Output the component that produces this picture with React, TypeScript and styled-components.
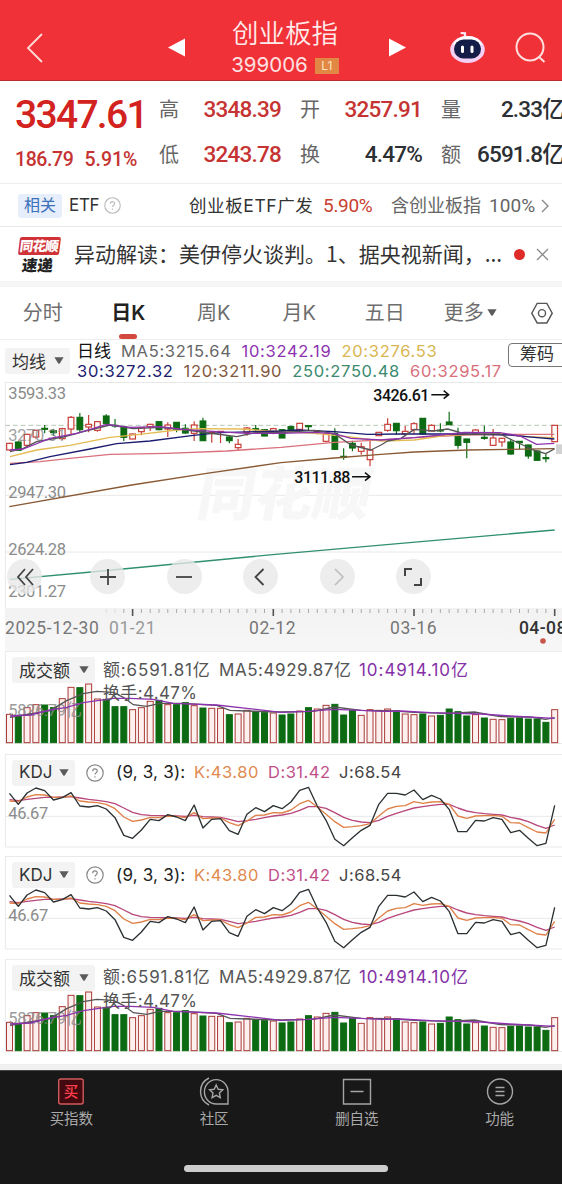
import React from "react";
import styled, { createGlobalStyle } from "styled-components";

const CJK = '"Noto Sans CJK SC", sans-serif';

const Global = createGlobalStyle`
  * { box-sizing: border-box; }
  body { margin: 0; background: #fff; font-family: Inter, ${CJK}; color: #333; overflow: hidden; }
  svg { display: block; }
`;

const Page = styled.div`
  width: 562px; height: 1184px; overflow: hidden;
  display: flex; flex-direction: column; background: #fff;
`;

const Txt = styled.span<{ $s: number; $c?: string; $ls?: number; $w?: number; $width?: number }>`
  font-size: ${p => p.$s}px; color: ${p => p.$c || "#333"};
  letter-spacing: ${p => p.$ls || 0}px; font-weight: ${p => p.$w || 400};
  width: ${p => (p.$width ? p.$width + "px" : "auto")};
  white-space: nowrap; line-height: 1; flex: none;
`;
const Num = styled(Txt)`font-family: Roboto, ${CJK};`;

/* header */
const Header = styled.header`
  height: 81px; background: #f03137; border-bottom: 1px solid #b9292d;
  display: flex; align-items: flex-start; flex: none;
`;
const HeadCell = styled.div<{ $w: number; $t: number; $l?: number }>`
  width: ${p => p.$w}px; padding: ${p => p.$t}px 0 0 ${p => p.$l || 0}px; flex: none;
`;
const Title = styled.div`
  width: 178px; padding-top: 20px; display: flex; flex-direction: column; align-items: center; gap: 9px; flex: none;
`;
const CodeRow = styled.div`display: flex; align-items: center; gap: 7px; height: 20px;`;
const Level = styled.span`
  width: 24px; height: 16px; background: #e08844; color: #ffe2c0; font-size: 12px; line-height: 16px; text-align: center;
`;

/* quote */
const Quote = styled.section`
  height: 103px; border-bottom: 1px solid #eee; padding-top: 15px; flex: none; overflow: hidden;
  display: grid; grid-template-columns: 159px 141px 141px 125px;
`;
const PriceCol = styled.div`padding-left: 15px; display: flex; flex-direction: column;`;
const Changes = styled.div`display: flex; gap: 11px; margin-top: 15px;`;
const Stats = styled.div`display: flex; flex-direction: column; gap: 22px; padding-right: 19px; padding-top: 2px;
  &:last-child { padding-right: 2px; }`;
const Stat = styled.div`display: flex; justify-content: space-between; align-items: center; height: 23px;`;

/* related etf */
const Related = styled.section`
  height: 43px; border-bottom: 1px solid #e8e8e8; display: flex; align-items: center; padding: 1px 0 0 18px; flex: none;
`;
const Tag = styled.span`
  width: 44px; height: 24px; border-radius: 3px; background: #e5eefa; color: #3c6fba; font-size: 16px; line-height: 22px;
  text-align: center; margin-right: 7px; flex: none;
`;
const Fund = styled(Txt)`margin-left: 68px;`;
const News = styled.section`
  height: 60px; border-bottom: 6px solid #f5f5f5; display: flex; align-items: center; padding-left: 18px; flex: none;
`;
const Badge = styled.div`width: 43px; display: flex; flex-direction: column; align-items: center; font-weight: 900; margin-right: 13px; font-family: ${CJK};`;
const BadgeTop = styled.div`
  width: 41px; height: 18px; border-radius: 2px; background: #cf3338; color: #fff; font-size: 13.5px; line-height: 17px; text-align: center; transform: skewX(-7deg); letter-spacing: -0.8px;
  text-indent: -1px;
`;
const BadgeBottom = styled.div`font-size: 15.5px; line-height: 16px; color: #222; transform: skewX(-7deg); margin: 1px 3px 0 0;`;
const Dot = styled.i`width: 11px; height: 11px; border-radius: 50%; background: #e02c28; margin: 0 11px 0 14px;`;
const Headline = styled(Txt)`font-family: ${CJK}; padding-bottom: 2px;`;

/* tabs */
const Tabs = styled.nav`height: 53px; border-bottom: 1px solid #eee; display: flex; flex: none;`;
const Tab = styled.div<{ $on?: boolean; $w?: number }>`
  width: ${p => p.$w || 85.5}px; flex: none; display: flex; flex-direction: column; align-items: center;
  padding-top: 15px; gap: 10px; font-size: 20px; line-height: 22px; color: ${p => (p.$on ? "#222" : "#6e6e6e")};
  font-weight: ${p => (p.$on ? 600 : 400)};
  &::after { content: ""; width: 18px; height: 5px; border-radius: 3px; background: ${p => (p.$on ? "#d4483f" : "transparent")}; }
`;
const More = styled.span`display: flex; align-items: center; gap: 3px; svg { margin-bottom: 2px; }`;

/* legend */
const LegendBar = styled.section`height: 42px; display: flex; flex: none; padding-left: 5px; overflow: hidden;`;
const Picker = styled.div<{ $w: number; $t?: number }>`
  width: ${p => p.$w}px; height: 26px; border-radius: 3px; background: #f3f3f3; color: #333; font-size: 17px;
  display: flex; align-items: center; justify-content: space-between; padding: 0 6px 1px 7px; flex: none;
  margin-top: ${p => p.$t || 0}px;
`;
const Lines = styled.div`width: 438px; padding: 1px 0 0 7px; flex: none;`;
const Line = styled.div`height: 20px; display: flex; align-items: center; gap: 10px;`;
const Chips = styled.div`
  width: 62px; height: 24px; margin-top: 3px; border: 1px solid #777; border-radius: 4px; font-size: 17px; line-height: 21px; padding-left: 11px; color: #333; flex: none;
`;

/* charts */
const Chart = styled.section`position: relative; height: 226px; flex: none;`;
const Controls = styled.div`
  position: absolute; left: 7px; top: 177px; display: flex; gap: 41.4px;
`;
const RoundBtn = styled.div<{ $off?: boolean }>`
  width: 35px; height: 35px; border-radius: 50%; background: rgba(232,232,232,0.78);
  display: flex; align-items: center; justify-content: center; flex: none; color: ${p => (p.$off ? "#bbb" : "#444")};
  &:first-child { margin-right: 7px; }
`;
const Axis = styled.section`
  height: 43px; margin-left: 5px; background: linear-gradient(#f2f2f2, #f7f7f7); flex: none; overflow: hidden;
`;
const Dates = styled.div`display: grid; grid-template-columns: 104px 140px 141px 129px 60px; padding-top: 2px;`;
const PanelBox = styled.section`position: relative; height: 102.5px; flex: none;`;
const PanelHead = styled.div`
  position: absolute; left: 12px; top: 6px; right: 0; display: flex; align-items: center;
`;
const HeadText = styled.div`display: flex; padding-left: 8px;`;
const HelpWrap = styled.span`padding: 0 12px 0 11px;`;
const Sub = styled.div`position: absolute; left: 103px; top: 34px; line-height: 1; font-size: 0;`;
const Spacer = styled.div`flex: 1; border-bottom: 6px solid #f0f0f0;`;

/* bottom */
const Bottom = styled.footer`height: 114px; background: #181818; border-top: 1px solid #444; flex: none; display: flex; flex-direction: column; align-items: center; justify-content: space-between; padding-bottom: 12px;`;
const NavRow = styled.div`width: 571px; align-self: flex-start; display: flex; padding-top: 6px;`;
const NavItem = styled.div`width: 143px; display: flex; flex-direction: column; align-items: center; gap: 3px; color: #aaa; font-size: 14.5px; line-height: 19px;`;
const Home = styled.div`width: 204px; height: 7px; border-radius: 4px; background: #cdcdcd; margin-left: 10px;`;

const Caret = () => (
  <svg width="10" height="7" viewBox="0 0 10 7"><path d="M0.4 0.3h9.2L5.9 6.2q-.9 1-1.8 0z" fill="#5b5b5b" /></svg>
);
const Help = ({ s, c }: { s: number; c: string }) => (
  <svg width={s} height={s} viewBox="0 0 18 18" fill="none" stroke={c} strokeWidth="1.2">
    <circle cx="9" cy="9" r="8.2" />
    <path d="M6.7 7.2c0-3 4.6-3 4.6-.2 0 1.7-2.3 1.8-2.3 3.6M9 12.2v1.4" />
  </svg>
);

const step = 26.38;
const cx = (i: number) => 28.5 + step * i;
const UP = "#c73a32";
const DOWN = "#0c6b12";

// [direction, high, body top, body bottom, low] in chart units
const candles: [number, number, number, number, number][] = [
  [1,323,325,345,347],[0,319,321,346,347],[1,296,298,331,338],[1,284,286,306,311],[0,270,280,283,295],[0,281,287,293,303],
  [1,278,281,311,315],[1,243,247,282,300],[0,234,247,284,292],[1,240,268,276,292],[1,258,260,286,290],[0,238,243,266,270],
  [0,252,271,273,278],[0,274,275,307,318],[1,296,297,312,313],[1,277,278,290,301],[1,266,268,275,288],[0,259,260,284,286],
  [1,262,270,282,306],[0,261,262,284,292],[0,268,280,294,297],[1,259,270,295,318],[0,248,258,317,318],[1,288,291,293,323],
  [1,288,289,291,324],[0,303,306,317,325],[1,312,328,338,347],[1,276,279,292,302],[0,270,281,284,288],[0,283,284,303,304],
  [1,278,281,290,298],[0,283,284,309,309],[0,272,275,288,288],[1,264,265,283,285],[0,270,272,275,287],[1,285,289,292,298],
  [1,296,297,319,322],[0,280,295,343,345],[0,340,364,367,374],[0,317,325,339,349],[1,323,335,349,359],[1,318,345,374,394],
  [1,291,292,302,303],[1,250,268,286,290],[0,264,265,287,300],[1,273,289,297,298],[1,262,266,284,296],[0,249,250,297,298],
  [1,268,271,288,288],[0,265,286,288,292],[0,230,261,269,269],[0,278,304,331,341],[0,311,312,322,370],[1,282,285,295,296],
  [0,272,307,310,314],[1,282,309,331,332],[1,308,310,321,335],[0,312,321,357,359],[0,318,319,323,343],[0,329,330,363,371],
  [0,346,348,376,377],[0,357,368,371,382],[1,270,271,320,321],
];

const mas: [string, string][] = [
  ["#8a5a35", "28,515 395,450 620,415 843,383 1003,369 1143,358 1243,351 1403,345 1664,341"],
  ["#2f8f72", "30,733 274,711 818,659 1237,622 1664,585"],
  ["#d9707c", "30,385 120,380 210,370 330,358 500,355 680,348 843,337 1003,322 1103,317 1243,308 1393,300 1543,298 1663,298"],
  ["#e4bb52", "30,365 110,345 210,331 330,307 420,298 530,285 600,281 720,282 843,290 943,295 1043,305 1143,318 1243,315 1343,300 1500,296 1580,305 1663,308"],
  ["#1b1b70", "30,389 80,382 150,365 270,342 350,326 450,318 580,301 660,293 843,288 893,285 1003,290 1103,298 1200,297 1400,297 1530,300 1603,307 1663,312"],
  ["#555", "30,350 70,340 110,320 190,306 250,290 330,270 400,281 480,277 560,285 650,297 710,305 770,292 843,293 943,286 1003,296 1053,330 1113,345 1143,330 1163,318 1203,310 1243,283 1300,288 1343,282 1400,298 1500,297 1543,318 1600,345 1637,356 1663,342"],
  ["#8d33ae", "30,345 70,342 150,310 230,295 320,268 390,277 480,275 550,283 650,290 740,295 843,295 943,292 1003,296 1053,310 1143,315 1243,308 1323,300 1393,292 1500,293 1560,303 1610,328 1663,325"],
];

const volTop = [192,195,172,163,164,172,145,111,112,101,146,147,169,169,178,172,153,150,163,163,157,166,173,174,174,193,191,180,185,187,188,194,191,182,172,176,165,162,194,180,195,178,180,176,181,191,193,191,197,195,176,184,197,193,203,207,208,204,203,206,206,216,178];
const volUp = [0,2,3,6,7,9,10,14,15,16,18,21,23,24,26,27,30,33,35,36,40,41,42,43,45,46,48,53,55,56,62];

const J = [127,160,126,111,119,147,140,125,165,168,164,174,200,253,262,237,205,209,191,198,209,162,231,205,203,239,250,190,170,182,164,173,153,118,109,165,208,265,284,260,238,223,160,127,127,132,117,146,133,144,175,242,242,208,210,200,205,245,238,262,284,277,163];
const K = [150,152,138,131,132,139,139,135,150,153,155,160,173,198,211,207,199,200,195,196,200,185,203,201,201,215,224,210,193,192,185,186,177,158,148,168,190,212,229,227,224,218,195,174,166,164,152,157,153,152,160,195,202,195,194,193,196,215,216,230,243,246,205];
const D = [146,149,145,142,139,139,138,137,141,145,148,152,158,171,184,191,193,194,194,195,196,193,197,198,199,205,212,209,205,200,195,192,187,178,167,167,172,185,199,208,213,215,208,196,187,179,171,167,163,160,160,171,180,185,188,190,192,199,204,212,223,232,222];
const pts = (a: number[]) => a.map((v, i) => `${cx(i)},${v}`).join(" ");

const axisText = { fontFamily: "Roboto, Noto Sans CJK SC", fontSize: 49.5, fill: "#8b8b8b", letterSpacing: -1.2 };

const PriceChart = () => (
  <Chart>
    <svg width="562" height="226" viewBox="0 141 1686 678">
      <path d="M16 142.500H1686M16 142V819M16 481H1686M16 651H1686" fill="none" stroke="#e8e8e8" strokeWidth="3" />
      <text x="586" y="541" fontFamily="Noto Sans CJK SC" fontWeight="900" fontSize="173" fill="#f7f7f7" transform="translate(94 0) skewX(-10)">同花顺</text>
      <path d="M16 271H1686" stroke="#a5bda5" strokeWidth="2.500" strokeDasharray="14 9" />
      {candles.map(([up, h, t, b, l], i) => (
        <g key={i} stroke={up ? UP : DOWN} strokeWidth="3.500">
          <path d={`M${cx(i)} ${h}V${t}M${cx(i)} ${b}V${l}`} />
          <rect x={cx(i) - 8.5} y={t} width="17" height={b - t} fill={up ? "#fff" : DOWN} />
        </g>
      ))}
      <g {...axisText}>
        <text x="25" y="193">3593.33</text><text x="25" y="319" opacity="0.8">3270.31</text><text x="25" y="489">2947.30</text>
        <text x="25" y="660">2624.28</text><text x="25" y="786">2301.27</text>
      </g>
      {mas.map(([c, p]) => <polyline key={c} points={p} fill="none" stroke={c} strokeWidth="4" strokeLinejoin="round" />)}
      <rect x="1668" y="328" width="18" height="29" fill="#d2d2d2" />
      <g fontFamily="Roboto" fontWeight="500" fontSize="48" fill="#111">
        <text x="1120" y="197" textLength="168">3426.61</text><text x="883" y="443" textLength="168">3111.88</text>
      </g>
      <path d="M1294 179H1345M1331 167L1346 179L1331 191M1056 425H1109M1095 413L1110 425L1095 437" stroke="#111" strokeWidth="4.500" fill="none" />
    </svg>
    <Controls>
      <RoundBtn><svg width="20" height="20" fill="none" stroke="currentColor" strokeWidth="1.800"><path d="M10 2L3 10l7 8M18 2l-7 8 7 8" /></svg></RoundBtn>
      <RoundBtn><svg width="18" height="18" stroke="currentColor" strokeWidth="1.800"><path d="M1 9h16M9 1v16" /></svg></RoundBtn>
      <RoundBtn><svg width="18" height="18" stroke="currentColor" strokeWidth="1.800"><path d="M1 9h16" /></svg></RoundBtn>
      <RoundBtn><svg width="18" height="18" fill="none" stroke="currentColor" strokeWidth="1.800"><path d="M11.500 1L3.500 9l8 8" /></svg></RoundBtn>
      <RoundBtn $off><svg width="18" height="18" fill="none" stroke="currentColor" strokeWidth="1.500"><path d="M7 1l8 8-8 8" /></svg></RoundBtn>
      <RoundBtn><svg width="20" height="20" fill="none" stroke="currentColor" strokeWidth="2"><path d="M2 9V2h7M18 11v7h-7" /></svg></RoundBtn>
    </Controls>
  </Chart>
);

const VolumePanel = () => (
  <PanelBox>
    <svg width="562" height="102" viewBox="0 3 1686 306">
      <path d="M16 4H1686M16 4V280M16 280.500H1686" stroke="#e9e9e9" strokeWidth="3" fill="none" />
      {volTop.map((t, i) => {
        const up = volUp.includes(i);
        return <rect key={i} x={cx(i) - 9} y={t + 1} width="18" height={277 - t} fill={up ? "#fdf0ee" : DOWN} stroke={up ? "#a93a36" : DOWN} strokeWidth="3" />;
      })}
      <text x="25" y="197" {...axisText} opacity="0.85">5826.79亿</text>
      <g fill="none" strokeWidth="4">
        <polyline stroke="#555" points="30,202 90,192 150,182 200,152 250,131 290,124 340,127 370,142 400,164 440,169 480,160 550,160 650,166 690,181 740,183 843,186 940,184 1003,171 1083,181 1163,182 1243,187 1343,190 1423,186 1500,200 1590,201 1637,208 1664,203" />
        <polyline stroke="#8d33ae" points="30,198 90,195 150,180 200,172 250,158 340,145 390,145 460,148 520,160 650,165 740,175 843,187 920,184 1003,178 1083,181 1143,184 1203,183 1293,188 1443,192 1530,198 1664,205" />
      </g>
    </svg>
    <PanelHead>
      <Picker $w={83}>成交额<Caret /></Picker>
      <HeadText>
        <Txt $s={17} $ls={0.85} $c="#555" $width={116}>额:6591.81亿</Txt>
        <Txt $s={17} $ls={0.55} $c="#555" $width={140}>MA5:4929.87亿</Txt>
        <Txt $s={17} $ls={0.95} $c="#8430a6">10:4914.10亿</Txt>
      </HeadText>
    </PanelHead>
    <Sub><Txt $s={17} $ls={0.35} $c="#555">换手:4.47%</Txt></Sub>
  </PanelBox>
);

const KdjPanel = () => (
  <PanelBox>
    <svg width="562" height="102" viewBox="0 9 1686 306">
      <path d="M16 10.500H1686M16 10V288M16 288H1686M16 196H1686" stroke="#e9e9e9" strokeWidth="3" fill="none" />
      <text x="25" y="204" {...axisText}>46.67</text>
      <g fill="none" strokeWidth="4" strokeLinejoin="round">
        <polyline points={pts(D)} stroke="#b8477c" />
        <polyline points={pts(K)} stroke="#df8048" />
        <polyline points={pts(J)} stroke="#2b3033" />
      </g>
    </svg>
    <PanelHead>
      <Picker $w={63}>KDJ<Caret /></Picker>
      <HelpWrap><Help s={18} c="#888" /></HelpWrap>
      <Txt $s={17} $c="#222" $ls={0.2} $width={78}>(9, 3, 3):</Txt>
      <Txt $s={16.500} $c="#e08a50" $ls={0.5} $width={74}>K:43.80</Txt>
      <Txt $s={16.500} $c="#c1508a" $ls={0.5} $width={71}>D:31.42</Txt>
      <Txt $s={16.500} $c="#444" $ls={0.5}>J:68.54</Txt>
    </PanelHead>
  </PanelBox>
);

const RED = "#c53432";
const INK = "#2c2f33";
const statCols: [string, string, string][][] = [
  [["高", "3348.39", RED], ["低", "3243.78", RED]],
  [["开", "3257.91", RED], ["换", "4.47%", INK]],
  [["量", "2.33亿", INK], ["额", "6591.8亿", INK]],
];

const legend: [string, string][][] = [
  [["MA5:3215.64", "#666"], ["10:3242.19", "#8d33ae"], ["20:3276.53", "#d9b650"]],
  [["30:3272.32", "#1b1b70"], ["120:3211.90", "#83583c"], ["250:2750.48", "#3c8a70"], ["60:3295.17", "#d9707c"]],
];

export default function App() {
  return (
    <Page>
      <Global />
      <Header>
        <HeadCell $w={168} $t={33} $l={26}><svg width="18" height="31" fill="none" stroke="#ffdcdc" strokeWidth="1.800"><path d="M16 1L2 15L16 29" /></svg></HeadCell>
        <HeadCell $w={28} $t={38}><svg width="18" height="19"><path d="M0 9.500L17 0.500V18.500z" fill="#fff" /></svg></HeadCell>
        <Title>
          <Txt $s={26.500} $c="#ffeaea" $w={350}>创业板指</Txt>
          <CodeRow><Txt $s={20.500} $c="#ffe1e1">399006</Txt><Level>L1</Level></CodeRow>
        </Title>
        <HeadCell $w={76} $t={38} $l={15}><svg width="18" height="19"><path d="M17 9.500L0 0.500V18.500z" fill="#fff" /></svg></HeadCell>
        <HeadCell $w={65} $t={29}>
          <svg width="36" height="36" viewBox="0 0 36 36">
            <path d="M11.500 4L15 4.300V8" stroke="#ffe9f4" strokeWidth="2.200" fill="none" strokeLinecap="round" />
            <ellipse cx="17.500" cy="20.500" rx="17.300" ry="13.600" fill="#f3d0f4" />
            <path d="M3 16Q6 7 17.500 7t14.500 9z" fill="#fff" />
            <rect x="4" y="10.500" width="27" height="19" rx="9.500" fill="#141d48" />
            <rect x="11" y="16.500" width="3" height="7.500" rx="1.500" fill="#fff" /><rect x="20.500" y="16.500" width="3" height="7.500" rx="1.500" fill="#fff" />
          </svg>
        </HeadCell>
        <HeadCell $w={40} $t={32}><svg width="32" height="32" fill="none" stroke="#ffdede" strokeWidth="2"><circle cx="15" cy="15" r="13.500" /><path d="M24 25l5.500 5" /></svg></HeadCell>
      </Header>

      <Quote>
        <PriceCol>
          <Num $s={39} $w={500} $c="#d22320" $ls={-1.7}>3347.61</Num>
          <Changes><Num $s={19.500} $w={500} $c={RED} $ls={-0.4}>186.79</Num><Num $s={19.500} $w={500} $c={RED}>5.91%</Num></Changes>
        </PriceCol>
        {statCols.map((col, i) => (
          <Stats key={i}>{col.map(([k, v, c]) => (
            <Stat key={k}><Txt $s={20} $c="#666">{k}</Txt><Num $s={22.500} $w={500} $c={c} $ls={-0.8}>{v}</Num></Stat>
          ))}</Stats>
        ))}
      </Quote>

      <Related>
        <Tag>相关</Tag><Txt $s={17} $ls={-0.3} $width={35}>ETF</Txt><Help s={17} c="#bbb" />
        <Fund $s={17.500} $ls={0.6} $width={134}>创业板ETF广发</Fund>
        <Num $s={19} $c="#c8402f" $ls={-0.3} $width={68}>5.90%</Num>
        <Txt $s={18} $c="#666" $width={98}>含创业板指</Txt>
        <Num $s={19} $c="#666" $ls={0.1} $width={52}>100%</Num>
        <svg width="8" height="14" fill="none" stroke="#888" strokeWidth="1.400"><path d="M1 1l6 6-6 6" /></svg>
      </Related>

      <News>
        <Badge><BadgeTop>同花顺</BadgeTop><BadgeBottom>速递</BadgeBottom></Badge>
        <Headline $s={21} $width={426}>异动解读：美伊停火谈判。1、据央视新闻，...</Headline>
        <Dot />
        <svg width="13" height="13" stroke="#888" strokeWidth="1.300"><path d="M1 1l11 11M12 1L1 12" /></svg>
      </News>

      <Tabs>
        <Tab>分时</Tab><Tab $on>日K</Tab><Tab>周K</Tab><Tab>月K</Tab><Tab>五日</Tab>
        <Tab><More>更多<Caret /></More></Tab>
        <Tab $w={57}><svg width="24" height="24" viewBox="0 0 24 24" fill="none" stroke="#555" strokeWidth="1.500"><path d="M6.800 1.500h10.400L23 12l-5.800 10.500H6.800L1 12z" /><circle cx="12" cy="12" r="3.800" /></svg></Tab>
      </Tabs>

      <LegendBar>
        <Picker $w={65} $t={8}>均线<Caret /></Picker>
        <Lines>
          {legend.map((row, i) => (
            <Line key={i}>
              {i === 0 && <Txt $s={17} $c="#111">日线</Txt>}
              {row.map(([t, c]) => <Txt key={t} $s={16.500} $c={c} $ls={i === 0 ? 0.7 : 0.9 - 0.2}>{t}</Txt>)}
            </Line>
          ))}
        </Lines>
        <Chips>筹码</Chips>
      </LegendBar>

      <PriceChart />

      <Axis>
        <svg width="557" height="10" viewBox="5 0 557 10">
          {Array.from({ length: 52 }, (_, k) => {
            const i = k + 11;
            const major = (i - 14) % 16 === 0;
            return <path key={i} d={`M${cx(i) / 3} 1v${major ? 7 : 4}`} stroke={major ? "#555" : i < 13 ? "#ddd" : "#aaa"} strokeWidth={major ? 1.6 : 1} />;
          })}
        </svg>
        <Dates>
          <Num $s={17.500} $c="#777" $ls={0.6}>2025-12-30</Num><Num $s={17.500} $c="#999" $ls={0.6}>01-21</Num><Num $s={17.500} $c="#777" $ls={0.6}>02-12</Num><Num $s={17.500} $c="#777" $ls={0.6}>03-16</Num><Num $s={17.500} $w={500} $c="#333" $ls={0.4}>04-08</Num>
        </Dates>
        <svg width="557" height="6"><circle cx="538" cy="3" r="2.800" fill="#c9564a" /></svg>
      </Axis>

      <VolumePanel />
      <KdjPanel />
      <KdjPanel />
      <VolumePanel />
      <Spacer />

      <Bottom>
        <NavRow>
          <NavItem>
            <svg width="30" height="29" viewBox="0 0 30 29"><rect x="2.700" y="2" width="24.500" height="25" rx="2" fill="#420a0e" stroke="#d05a5c" strokeWidth="1.400" /><text x="15" y="20" textAnchor="middle" fontFamily="Noto Sans CJK SC" fontSize="14.500" fontWeight="500" fill="#ff3f50">买</text></svg>
            买指数
          </NavItem>
          <NavItem>
            <svg width="30" height="29" viewBox="0 0 30 29" fill="none" stroke="#a5a5a5" strokeWidth="1.400"><path d="M29 14.500A11.800 12.200 0 1 0 17.200 27H29zM10 1A15 15 0 0 0 10 28M17.200 8l2 4.300 4.600.5-3.400 3.200.9 4.700-4.100-2.400-4.100 2.400.9-4.700-3.400-3.200 4.600-.5z" /></svg>
            社区
          </NavItem>
          <NavItem>
            <svg width="30" height="29" viewBox="0 0 30 29" fill="none" stroke="#a5a5a5" strokeWidth="1.400"><path d="M1.500 2.500h27v24.500h-27zM8.500 14.500h13" /></svg>
            删自选
          </NavItem>
          <NavItem>
            <svg width="30" height="29" viewBox="0 0 30 29" fill="none" stroke="#a5a5a5" strokeWidth="1.400"><circle cx="15" cy="14.500" r="12.500" /><path d="M10.500 10.500h9M10.500 14.500h9M10.500 18.500h9" /></svg>
            功能
          </NavItem>
        </NavRow>
        <Home />
      </Bottom>
    </Page>
  );
}
